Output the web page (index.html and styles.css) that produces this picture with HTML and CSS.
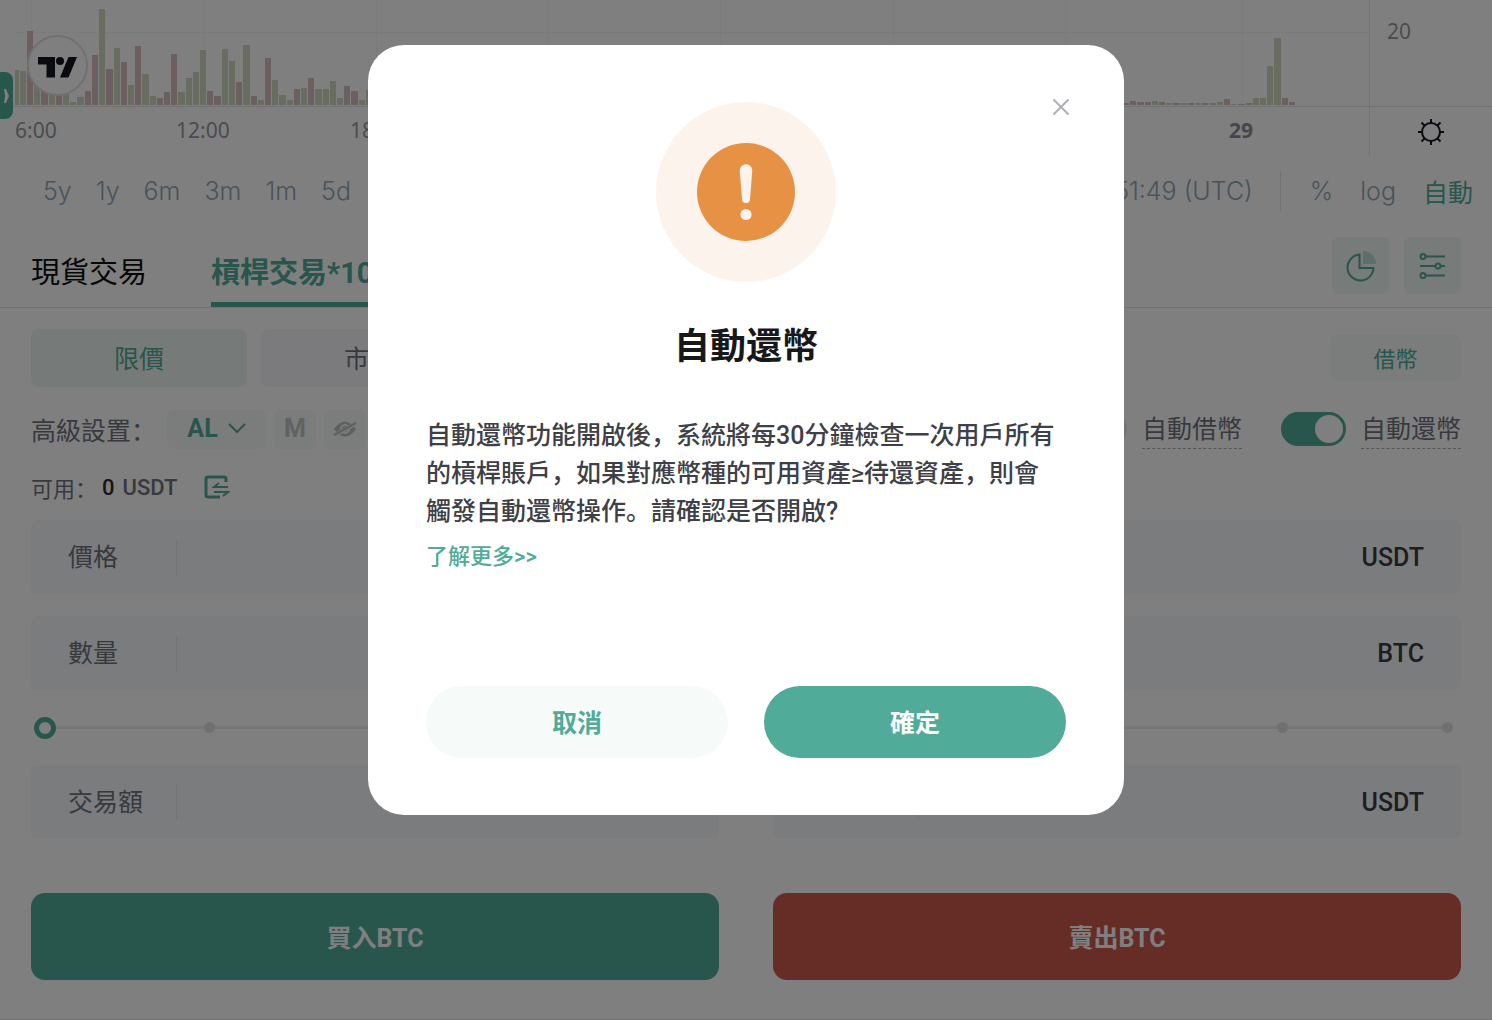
FILE: index.html
```html
<!DOCTYPE html>
<html lang="zh-CN">
<head>
  <meta charset="UTF-8" />
  <title>槓桿交易</title>
  <meta name="viewport" content="width=device-width, initial-scale=1.0" />
  <link rel="stylesheet" href="styles.css">
</head>
<body>
  <section class="chart">
    <div class="plot">
      <svg id="volume" class="volume" aria-hidden="true">
        <path class="grid" d="M15 32.5H2000M31.5 0V105M203.5 0V105M376.5 0V105M548.5 0V105M720.5 0V105M893.5 0V105M1065.5 0V105M1242.5 0V105" />
      </svg>
      <a href="#" class="tv-logo" aria-label="TradingView">
        <svg width="57" height="57" viewBox="0 0 57 57">
          <path d="M9 20h17v20.500h-8.500V27.500H9zM39.500 20H48L39.500 40.500H31z" fill="#131722" />
          <circle cx="31" cy="24" r="4" fill="#131722" />
        </svg>
      </a>
      <button class="drawer" aria-label="展開工具欄">
        <svg width="13" height="20" viewBox="0 0 13 20"><path d="M4 3h2l3 7-3 7H4l1-7z" fill="#fff" /></svg>
      </button>
    </div>
    <div class="scale">20</div>
    <div class="times">
      <span>6:00</span>
      <span>12:00</span>
      <span>18:00</span>
      <b>29</b>
    </div>
    <div class="corner">
      <button class="plain" aria-label="圖表設置">
        <svg width="28" height="28" viewBox="0 0 28 28" fill="none" stroke="#131722" stroke-width="2">
          <circle cx="14" cy="14" r="9" />
          <path d="M14 1v4M14 23v4M1 14h4M23 14h4M4.500 4.500l3 3M20.500 20.500l3 3M4.500 23.500l3-3M20.500 7.500l3-3" />
        </svg>
      </button>
    </div>
  </section>

  <nav class="ranges">
    <a href="#">5y</a>
    <a href="#">1y</a>
    <a href="#">6m</a>
    <a href="#">3m</a>
    <a href="#">1m</a>
    <a href="#">5d</a>
    <a href="#">1d</a>
    <div class="modes">
      <span>05:51:49 (UTC)</span>
      <a href="#" class="percent">%</a>
      <a href="#">log</a>
      <a href="#" class="on">自動</a>
    </div>
  </nav>

  <header class="tabs">
    <a href="#">現貨交易</a>
    <a href="#" class="active">槓桿交易*10X</a>
    <div class="tools">
      <button class="tool" aria-label="資產分佈">
        <svg width="32" height="32" viewBox="0 0 32 32" fill="none">
          <path d="M14.500 4.500A13 13 0 1 0 28.500 18H14.500z" stroke="#50ab98" stroke-width="2" />
          <path d="M18 1a13 13 0 0 1 13 13H18z" fill="#bcdcd6" />
        </svg>
      </button>
      <button class="tool" aria-label="偏好設置">
        <svg width="28" height="28" viewBox="0 0 28 28" fill="none" stroke="#50ab98" stroke-width="2">
          <circle cx="4" cy="4.500" r="2.500" /><path d="M7 4.500h19" />
          <circle cx="19" cy="14" r="2.500" /><path d="M1 14h15M22 14h4" />
          <circle cx="4" cy="23.500" r="2.500" /><path d="M7 23.500h19" />
        </svg>
      </button>
    </div>
  </header>

  <main class="trade">
    <div class="row order-types">
      <button class="type active">限價</button>
      <button class="type">市價</button>
      <button class="borrow">借幣</button>
    </div>

    <div class="row advanced">
      <span class="caption">高級設置：</span>
      <button class="chip chip-al">AL
        <svg width="18" height="12" viewBox="0 0 18 12" fill="none" stroke="#50ab98" stroke-width="2"><path d="M1 1l8 8 8-8" /></svg>
      </button>
      <button class="chip">M</button>
      <button class="chip" aria-label="隱藏委託">
        <svg width="24" height="18" viewBox="0 0 24 18" fill="none">
          <path d="M1 9Q12-6 23 9Q12 24 1 9z" fill="#bcc0c0" />
          <circle cx="12" cy="9" r="4" stroke="#f4f8f7" stroke-width="2" />
          <path d="M0 16L24 3" stroke="#f4f8f7" stroke-width="4" />
          <path d="M1 15L23 3" stroke="#bcc0c0" stroke-width="2" />
        </svg>
      </button>
      <div class="switches">
        <input type="checkbox" class="switch" id="autoBorrow">
        <label for="autoBorrow">自動借幣</label>
        <input type="checkbox" class="switch" id="autoRepay" checked>
        <label for="autoRepay">自動還幣</label>
      </div>
    </div>

    <div class="row available">
      <span class="available-label">可用：</span>
      <b>0</b>
      <b class="coin">USDT</b>
      <button class="plain" aria-label="劃轉">
        <svg width="26" height="24" viewBox="0 0 26 24" fill="none" stroke="#50ab98" stroke-width="2">
          <path d="M22 7V4a2 2 0 0 0-2-2H4a2 2 0 0 0-2 2v16a2 2 0 0 0 2 2h12" stroke-width="3" />
          <path d="M24 12H10l5-4M10 17h14l-5 4" />
        </svg>
      </button>
    </div>

    <div class="sides">
      <form class="side">
        <div class="field">
          <label for="buyPrice">價格</label>
          <input type="text" id="buyPrice">
          <span>USDT</span>
        </div>
        <div class="field">
          <label for="buyAmount">數量</label>
          <input type="text" id="buyAmount">
          <span>BTC</span>
        </div>
        <div class="slider">
          <div class="stops"><i></i><i></i><i></i><i></i><i></i></div>
          <input type="range" min="0" max="100" value="0" aria-label="買入比例">
        </div>
        <div class="field">
          <label for="buyTotal">交易額</label>
          <input type="text" id="buyTotal">
          <span>USDT</span>
        </div>
        <button type="button" class="submit buy">買入BTC</button>
      </form>

      <form class="side">
        <div class="field">
          <label for="sellPrice">價格</label>
          <input type="text" id="sellPrice">
          <span>USDT</span>
        </div>
        <div class="field">
          <label for="sellAmount">數量</label>
          <input type="text" id="sellAmount">
          <span>BTC</span>
        </div>
        <div class="slider">
          <div class="stops"><i></i><i></i><i></i><i></i><i></i></div>
          <input type="range" min="0" max="100" value="0" aria-label="賣出比例">
        </div>
        <div class="field">
          <label for="sellTotal">交易額</label>
          <input type="text" id="sellTotal">
          <span>USDT</span>
        </div>
        <button type="button" class="submit sell">賣出BTC</button>
      </form>
    </div>
  </main>

  <div class="overlay">
    <div class="modal" role="dialog" aria-modal="true" aria-labelledby="modalTitle">
      <button class="close" aria-label="關閉">
        <svg width="18" height="18" viewBox="0 0 18 18" fill="none" stroke="#b0b1b5" stroke-width="2" stroke-linecap="round"><path d="M2 2l14 14M16 2L2 16" /></svg>
      </button>
      <svg class="warn" width="180" height="180" viewBox="0 0 180 180">
        <circle cx="90" cy="90" r="90" fill="#fcf3ec" />
        <circle cx="90" cy="90" r="49" fill="#e69143" />
        <path d="M83.700 68.500a6.300 6.300 0 0 1 12.600 0L94 97a4 4 0 0 1-8 0z" fill="#fcf3ec" />
        <circle cx="90" cy="112.500" r="5.600" fill="#fcf3ec" />
      </svg>
      <h2 id="modalTitle">自動還幣</h2>
      <p>自動還幣功能開啟後，系統將每30分鐘檢查一次用戶所有的槓桿賬戶，如果對應幣種的可用資產≥待還資產，則會觸發自動還幣操作。請確認是否開啟?</p>
      <a href="#" class="more">了解更多&gt;&gt;</a>
      <div class="buttons">
        <button class="btn secondary">取消</button>
        <button class="btn">確定</button>
      </div>
    </div>
  </div>

  <script src="script.js"></script>
</body>
</html>
```
FILE: styles.css
```css
* {
  box-sizing: border-box;
}

body {
  margin: 0;
  background-color: #fff;
  font-family: Roboto, "Noto Sans CJK SC", sans-serif;
  font-size: 25px;
  color: #70737e;
  min-height: 100vh;
  display: flex;
  flex-direction: column;
  border-bottom: 1px solid #eae8ea;
}

a {
  color: inherit;
  text-decoration: none;
}

button {
  border: none;
  padding: 0;
  font: inherit;
  color: inherit;
  cursor: pointer;
  display: flex;
  align-items: center;
  justify-content: center;
}

.plain {
  background: none;
}

/* chart */
.chart {
  display: grid;
  grid-template-columns: 1fr 123px;
  grid-template-rows: 106px 50px;
  font-family: "Noto Sans", sans-serif;
  font-size: 21px;
  color: #94989f;
}

.plot {
  position: relative;
}

.volume {
  display: block;
  width: 100%;
  height: 105px;
}

.grid {
  fill: none;
  stroke: #f5f6f7;
}

.up {
  fill: #d3dac2;
}

.down {
  fill: #d6bec0;
}

.tv-logo {
  position: absolute;
  left: 27px;
  top: 35px;
  width: 61px;
  height: 61px;
  border: 2px solid #e0e0e3;
  border-radius: 50%;
  background-color: #fff;
}

.drawer {
  position: absolute;
  left: 0;
  top: 72px;
  width: 13px;
  height: 47px;
  border-radius: 0 8px 8px 0;
  background-color: #50ab98;
}

.scale {
  border-left: 1px solid #e6e6e8;
  padding: 18px 17px;
  line-height: 27px;
}

.times {
  display: grid;
  grid-template-columns: 100px 140px 1fr 140px;
  border-top: 1px solid #e3e4e6;
  padding: 10px 0 0 15px;
  line-height: 27px;
}

.times span:nth-child(2) {
  padding-left: 61px;
}

.times span:nth-child(3) {
  padding-left: 95px;
}

.times b {
  color: #8a8d94;
}

.corner {
  display: flex;
  justify-content: center;
  align-items: center;
  border-top: 1px solid #e3e4e6;
  border-left: 1px solid #e6e6e8;
}

/* range bar */
.ranges {
  display: flex;
  align-items: center;
  gap: 24px;
  height: 70px;
  padding: 0 19px 0 43px;
  font-family: Inter, "Noto Sans CJK SC", sans-serif;
  font-weight: 300;
  color: #92a6b6;
}

.modes {
  display: flex;
  align-items: center;
  gap: 27px;
  margin-left: auto;
}

.percent {
  border-left: 1px solid #e6e7ea;
  padding-left: 29px;
  line-height: 40px;
}

.ranges .on {
  color: #50ab98;
  font-weight: 400;
}

/* tabs */
.tabs {
  display: flex;
  gap: 64px;
  height: 82px;
  padding: 0 31px;
  border-bottom: 1px solid #e3e5e6;
  font-size: 29px;
  line-height: 40px;
  color: #0c0c0e;
}

.tabs > a {
  padding-top: 27px;
}

.tabs .active {
  color: #50ab98;
  font-weight: bold;
  border-bottom: 5px solid #50ab98;
}

.tools {
  display: flex;
  gap: 15px;
  margin-left: auto;
  padding-top: 11px;
}

.tool {
  width: 57px;
  height: 57px;
  border-radius: 7px;
  background-color: #eef6f4;
}

/* order form */
.trade {
  padding: 21px 31px 38px;
}

.row {
  display: flex;
  align-items: center;
}

.order-types {
  gap: 14px;
}

.type {
  width: 216px;
  height: 58px;
  border-radius: 7px;
  background-color: #f6f7fb;
}

.type.active {
  background-color: #edf5f3;
  color: #50ab98;
}

.borrow {
  width: 131px;
  height: 46px;
  margin-left: auto;
  border-radius: 7px;
  background-color: #f5faf9;
  color: #50ab98;
  font-size: 22px;
  padding-bottom: 3px;
}

.type,
.btn,
.submit {
  padding-bottom: 2px;
}

.advanced {
  gap: 8px;
  margin-top: 21px;
}

.caption {
  width: 128px;
}

.chip {
  width: 42px;
  height: 40px;
  border-radius: 7px;
  background-color: #f5faf9;
  color: #c0c4c4;
  font-weight: bold;
}

.chip-al {
  width: 99px;
  gap: 10px;
  color: #50ab98;
}

.switches {
  display: flex;
  align-items: center;
  gap: 15px;
  margin-left: auto;
}

.switches label {
  border-bottom: 1px dashed #a8abb2;
  padding-top: 4px;
  line-height: 36px;
}

.switches label + .switch {
  margin-left: 24px;
}

.switch {
  appearance: none;
  display: flex;
  width: 65px;
  height: 34px;
  margin: 0;
  padding: 3px;
  border-radius: 17px;
  background-color: #e8eaec;
}

.switch::before {
  content: "";
  width: 28px;
  height: 28px;
  border-radius: 50%;
  background-color: #fff;
}

.switch:checked {
  justify-content: flex-end;
  background-color: #50ab98;
}

.available {
  gap: 8px;
  height: 40px;
  margin-top: 18px;
  font-size: 22px;
}

.available-label {
  width: 63px;
  white-space: nowrap;
}

.available b {
  font-weight: 500;
  color: #2c2d30;
}

.available .coin {
  color: inherit;
}

.available .plain {
  margin-left: 19px;
}

.sides {
  display: grid;
  grid-template-columns: 1fr 1fr;
  gap: 54px;
  margin-top: 13px;
}

.side {
  display: flex;
  flex-direction: column;
}

.field {
  display: flex;
  align-items: center;
  height: 74px;
  padding: 0 37px;
  border-radius: 7px;
  background-color: #f6f8fb;
}

.field + .field {
  margin-top: 22px;
}

.field label {
  width: 109px;
  border-right: 1px solid #e6e8ec;
  padding-top: 2px;
  line-height: 34px;
}

.field input {
  flex: 1;
  min-width: 0;
  height: 36px;
  border: none;
  background: none;
  font: inherit;
}

.field span {
  font-weight: 500;
  color: #3c3d41;
}

/* percent slider, thumb drawn over the stop marks */
.slider {
  display: grid;
  align-items: center;
  height: 75px;
  padding: 0 3px;
}

.slider > * {
  grid-area: 1 / 1;
}

.stops {
  display: flex;
  justify-content: space-between;
  align-items: center;
  height: 3px;
  margin: 0 5px;
  background-color: #ebecee;
}

.stops i {
  width: 11px;
  height: 11px;
  border-radius: 50%;
  background-color: #dfe1e5;
}

.stops i:first-child {
  background-color: #fff;
}

.slider input {
  appearance: none;
  width: 100%;
  height: 22px;
  margin: 0;
  background: none;
}

.slider input::-webkit-slider-thumb {
  appearance: none;
  width: 22px;
  height: 22px;
  border: 5px solid #50ab98;
  border-radius: 50%;
  background-color: #fff;
}

.submit {
  height: 87px;
  margin-top: 54px;
  border-radius: 14px;
  color: #fff;
  font-weight: bold;
}

.buy {
  background-color: #50ab98;
}

.sell {
  background-color: #ca5a4a;
}

/* modal */
.overlay {
  position: fixed;
  inset: 0;
  display: flex;
  justify-content: center;
  align-items: flex-start;
  padding-top: 45px;
  background-color: rgba(0,0,0,0.5);
}

.modal {
  position: relative;
  display: flex;
  flex-direction: column;
  width: 100%;
  max-width: 756px;
  padding: 57px 58px;
  border-radius: 36px;
  background-color: #fff;
}

.close {
  position: absolute;
  top: 53px;
  right: 54px;
  background: none;
}

.warn {
  align-self: center;
}

.modal h2 {
  margin: 40px 0 45px;
  font-size: 36px;
  line-height: 50px;
  text-align: center;
  color: #17181b;
}

.modal p {
  margin: 0;
  padding-right: 6px;
  font-weight: 500;
  line-height: 38px;
  color: #3e3f47;
}

.more {
  align-self: flex-start;
  margin-top: 10px;
  font-size: 22px;
  font-weight: 500;
  line-height: 32px;
  color: #50ab98;
}

.buttons {
  display: flex;
  gap: 36px;
  margin-top: 113px;
}

.btn {
  flex: 1;
  height: 72px;
  border-radius: 36px;
  background-color: #50ab99;
  color: #fff;
  font-weight: bold;
}

.btn.secondary {
  background-color: #f6faf9;
  color: #50ab99;
}
```
FILE: script.js
```js
// volume bars: positive = up candle, negative = down candle
const series = [
  { start: 0, values: [35, 34, -74, 20, -20, 18, -18, 14, 3, 8, -14, -50, 96, -36, 57, -43, 20, -59, 31, 9,
    -7, -13, -51, 13, 27, 33, 55, -14, -9, 56, 44, -23, 60, -9, 5, -47, 25, 10, 5, -16,
    17, -27, 16, 16, 24, 7, -19, -14, 5, 15] },
  { start: 154, values: [-2, -4, -3, -3, 4, -3, 2, -2, 2, -2, 2, -2, 2, 3, -6, 1, -1, -2, 7, 7, 39, 67, -7, -3] }
];

const svg = document.getElementById('volume');
series.forEach(({ start, values }) => {
  values.forEach((v, n) => {
    const x = Math.max(15, Math.round(12.6 + 7.21 * (start + n)));
    const next = Math.round(12.6 + 7.21 * (start + n + 1));
    const bar = document.createElementNS('http://www.w3.org/2000/svg', 'rect');
    bar.setAttribute('x', x);
    bar.setAttribute('y', 105 - Math.abs(v));
    bar.setAttribute('width', next - x - 1);
    bar.setAttribute('height', Math.abs(v));
    bar.setAttribute('class', v > 0 ? 'up' : 'down');
    svg.appendChild(bar);
  });
});
```
